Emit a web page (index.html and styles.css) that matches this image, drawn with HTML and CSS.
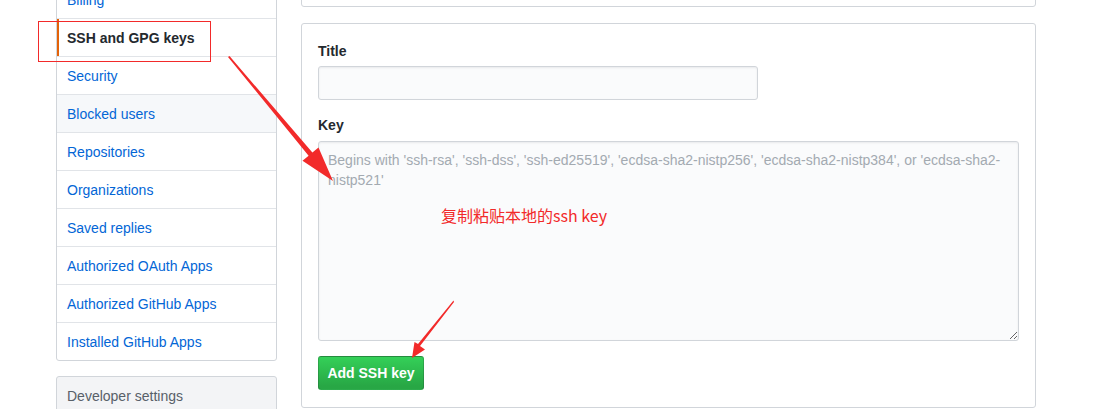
FILE: index.html
```html
<!DOCTYPE html>
<html lang="en">
<head>
<meta charset="utf-8">
<title>SSH and GPG keys</title>
<link rel="stylesheet" href="styles.css">
</head>
<body>
<div class="page">
  <nav class="sidebar">
    <div class="menu">
      <a class="menu-item">Billing</a>
      <a class="menu-item selected">SSH and GPG keys</a>
      <a class="menu-item">Security</a>
      <a class="menu-item hover">Blocked users</a>
      <a class="menu-item">Repositories</a>
      <a class="menu-item">Organizations</a>
      <a class="menu-item">Saved replies</a>
      <a class="menu-item">Authorized OAuth Apps</a>
      <a class="menu-item">Authorized GitHub Apps</a>
      <a class="menu-item last">Installed GitHub Apps</a>
    </div>
    <div class="menu dev">
      <div class="menu-heading">Developer settings</div>
    </div>
  </nav>
  <main class="main">
    <div class="box top-box"></div>
    <form class="box form-box">
      <div class="form-group">
        <label class="label">Title</label>
        <input class="input title-input" type="text">
      </div>
      <div class="form-group">
        <label class="label">Key</label>
        <textarea class="input key-input" placeholder="Begins with 'ssh-rsa', 'ssh-dss', 'ssh-ed25519', 'ecdsa-sha2-nistp256', 'ecdsa-sha2-nistp384', or 'ecdsa-sha2-nistp521'"></textarea>
      </div>
      <button class="btn" type="button">Add SSH key</button>
    </form>
  </main>
</div>

<div class="note">复制粘贴本地的ssh key</div>
<svg class="overlay" width="1108" height="409" viewBox="0 0 1108 409">
  <rect x="38.5" y="21.5" width="172" height="40" fill="none" stroke="#f22a2a" stroke-width="1"/>
  <polygon fill="#f22a2a" points="228,57 229.5,56 312.4,152.6 318.5,147.5 333,181 302.5,160.8 308.6,155.8"/>
  <polygon fill="#f22a2a" points="453.5,300.5 454,302 420,346 425,349.5 412,358 414.5,342 418,344"/>
</svg>
</body>
</html>
```
FILE: styles.css
```css
* { box-sizing: border-box; }
html { overflow: hidden; }
html, body { margin: 0; padding: 0; background: #fff; }
body {
  width: 1108px;
  height: 409px;
  overflow: hidden;
  position: relative;
  font-family: "Liberation Sans", Arial, sans-serif;
  font-size: 14px;
  line-height: 21px;
  color: #24292e;
}
.page {
  display: flex;
  align-items: flex-start;
  gap: 24px;
  padding-left: 56px;
  margin-top: -20px;
}
.sidebar { width: 221px; flex: none; }
.menu {
  border: 1px solid #d1d5da;
  border-radius: 3px;
  background: #fff;
  margin-bottom: 15px;
}
.menu-item {
  display: block;
  position: relative;
  height: 38px;
  padding: 9px 10px 7px;
  line-height: 21px;
  color: #0366d6;
  border-bottom: 1px solid #e1e4e8;
  text-decoration: none;
  white-space: nowrap;
}
.menu-item.last { border-bottom: 0; height: 37px; }
.menu-item.hover { background: #f6f8fa; }
.menu-item.selected { color: #24292e; font-weight: 600; }
.menu-item.selected::before {
  content: "";
  position: absolute;
  left: 0; top: 0; bottom: 0;
  width: 2px;
  background: #e36209;
}
.menu.dev { background: #f3f4f6; }
.menu-heading {
  padding: 9px 10px 7px;
  color: #586069;
}
.main { width: 735px; flex: none; }
.box {
  border: 1px solid #d1d5da;
  border-radius: 3px;
  background: #fff;
}
.top-box { height: 27px; margin-bottom: 16px; }
.form-box { padding: 17px 16px 16px; height: 385px; }
.form-group { margin-bottom: 15px; }
.label {
  display: block;
  font-weight: 600;
  margin-bottom: 4px;
}
.form-group + .form-group .label { margin-top: 1px; margin-bottom: 5px; }
.input {
  display: block;
  font-family: inherit;
  font-size: 14px;
  line-height: 20px;
  color: #24292e;
  background: #fafbfc;
  border: 1px solid #d1d5da;
  border-radius: 3px;
  box-shadow: inset 0 1px 2px rgba(27,31,35,0.075);
  padding: 6px 8px;
  outline: none;
}
.title-input { width: 440px; height: 34px; }
.key-input { width: 100%; height: 200px; padding: 8px 9px; resize: vertical; }
.key-input::placeholder { color: #a3aab1; }
.form-group:last-of-type { margin-bottom: 15px; }
.btn {
  display: block;
  height: 34px;
  width: 106px;
  padding: 0;
  font-family: inherit;
  font-size: 14px;
  font-weight: 600;
  line-height: 20px;
  white-space: nowrap;
  color: #fff;
  background: linear-gradient(#34d058, #28a745 90%);
  border: 1px solid rgba(27,31,35,0.2);
  border-radius: 3px;
  text-align: center;
}
.note {
  position: absolute;
  left: 441px;
  top: 204px;
  font-family: "Noto Sans CJK SC", "Liberation Sans", sans-serif;
  font-size: 16px;
  line-height: 22px;
  color: #f22a2a;
}
.overlay {
  position: absolute;
  left: 0; top: 0;
  pointer-events: none;
}
```
